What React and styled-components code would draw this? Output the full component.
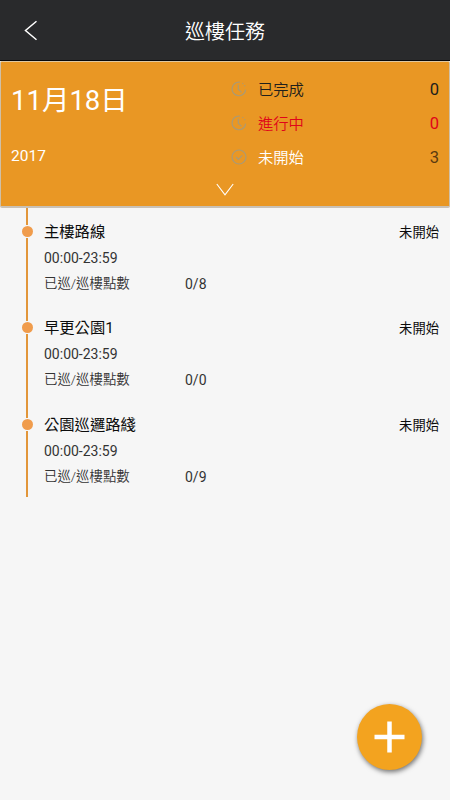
import React, { useState } from "react";
import styled, { createGlobalStyle } from "styled-components";

const summary = [
  { label: "已完成", count: 0, icon: "clock", color: "#20201c" },
  { label: "進行中", count: 0, icon: "clock", color: "#e0041a" },
  {
    label: "未開始",
    count: 3,
    icon: "check",
    color: "#ffffff",
    countColor: "#5a3a10",
  },
];

const tasks = [
  { id: 1, name: "主樓路線", time: "00:00-23:59", points: "0/8" },
  { id: 2, name: "早更公園1", time: "00:00-23:59", points: "0/0" },
  { id: 3, name: "公園巡邏路綫", time: "00:00-23:59", points: "0/9" },
];

const StatusIcon = ({ type }) => (
  <IconSvg viewBox="0 0 16 16">
    {type === "clock" ? (
      <>
        <path d="M8.8 1.2A6.8 6.8 0 1 0 14.6 8.6" />
        <path d="M11.4 2.2l.9.7M13.4 4.2l.6 1.1" />
        <path d="M7.3 3.8v4.4l3.2 3.2" />
      </>
    ) : (
      <>
        <circle cx="8" cy="8" r="7" />
        <path d="M5 8l2.4 2.3 3.9-4" />
      </>
    )}
  </IconSvg>
);

const App = () => {
  const [items] = useState(tasks);

  return (
    <>
      <GlobalStyle />
      <Screen>
        <Header>
          <BackButton aria-label="返回">
            <svg width="14" height="21" viewBox="0 0 14 21">
              <path d="M12.5 1.2L1.5 10.5l11 9.3" />
            </svg>
          </BackButton>
          <Title>巡樓任務</Title>
        </Header>
        <SummaryCard>
          <SummaryBody>
            <DateColumn>
              <DateText>11月18日</DateText>
              <Year>2017</Year>
            </DateColumn>
            <StatusList>
              {summary.map((row) => (
                <StatusRow key={row.label} color={row.color}>
                  <StatusIcon type={row.icon} />
                  <StatusLabel>{row.label}</StatusLabel>
                  <StatusCount $color={row.countColor}>{row.count}</StatusCount>
                </StatusRow>
              ))}
            </StatusList>
          </SummaryBody>
          <ExpandButton aria-label="展開">
            <svg width="18" height="13" viewBox="0 0 18 13">
              <path d="M0.8 1L9 11.8 17.2 1" />
            </svg>
          </ExpandButton>
        </SummaryCard>
        <TaskList>
          {items.map((task) => (
            <TaskItem key={task.id}>
              <Timeline>
                <Line $top />
                <Dot />
                <Line />
              </Timeline>
              <TaskContent>
                <TaskHead>
                  <TaskName>{task.name}</TaskName>
                  <TaskStatus>未開始</TaskStatus>
                </TaskHead>
                <TaskTime>{task.time}</TaskTime>
                <TaskPoints>
                  <PointsLabel>已巡/巡樓點數</PointsLabel>
                  <span>{task.points}</span>
                </TaskPoints>
              </TaskContent>
            </TaskItem>
          ))}
        </TaskList>
        <AddButton aria-label="新增">
          <svg width="31" height="32" viewBox="0 0 31 32">
            <path d="M15.5 0.5v31M0.5 16h30" />
          </svg>
        </AddButton>
      </Screen>
    </>
  );
};

const GlobalStyle = createGlobalStyle`
  * {
    box-sizing: border-box;
  }

  body {
    margin: 0;
    background-color: #f6f6f6;
    font-family: Roboto, "Noto Sans CJK TC", sans-serif;
  }

  button {
    padding: 0;
    border: none;
    background: none;
    cursor: pointer;
  }

  svg {
    display: block;
    fill: none;
  }
`;

const Screen = styled.div`
  height: 800px;
  overflow: hidden;
  background-color: #f6f6f6;
`;

const Header = styled.header`
  display: grid;
  grid-template-columns: 60px 1fr 60px;
  align-items: center;
  height: 61px;
  background-color: #292a2c;
  border-bottom: 1px solid #08080a;
`;

const BackButton = styled.button`
  padding-left: 24px;

  path {
    stroke: #ffffff;
    stroke-width: 1.5;
  }
`;

const Title = styled.h1`
  margin: 3px 0 0;
  color: #ffffff;
  font-size: 20px;
  font-weight: 350;
  line-height: 30px;
  text-align: center;
`;

const SummaryCard = styled.section`
  height: 147px;
  background-color: #e99724;
  border: 1px solid #cfc0a8;
  border-top-color: #e0c8a0;
  border-bottom: 2px solid #c9c1b6;
  border-radius: 2px;
`;

const SummaryBody = styled.div`
  display: flex;
  justify-content: space-between;
  height: 118px;
  padding: 10px 10px 0 10px;
`;

const DateColumn = styled.div`
  color: #ffffff;
`;

const DateText = styled.div`
  margin-top: 9px;
  font-size: 27.5px;
  line-height: 40px;
`;

const Year = styled.div`
  margin-top: 25px;
  font-size: 15.5px;
  line-height: 20px;
`;

const StatusList = styled.div`
  width: 208px;
`;

const StatusRow = styled.div`
  display: flex;
  align-items: center;
  height: 34px;
  color: ${(props) => props.color};
`;

const IconSvg = styled.svg`
  width: 16px;
  height: 16px;
  margin-top: -1px;
  stroke: #ab9a74;
  stroke-width: 1.2;
`;

const StatusLabel = styled.span`
  flex: 1;
  margin: -3px 0 0 11px;
  font-size: 15.3px;
  font-weight: 350;
`;

const StatusCount = styled.span`
  color: ${(props) => props.$color || "inherit"};
  font-size: 16.5px;
`;

const ExpandButton = styled.button`
  display: block;
  margin: 3px auto 0;

  path {
    stroke: #ffffff;
    stroke-width: 1.1;
  }
`;

const TaskList = styled.main`
  display: flex;
  flex-direction: column;
`;

const TaskItem = styled.article`
  display: flex;
  height: 96.3px;
  padding: 0 11px 0 21px;
`;

const Timeline = styled.div`
  display: flex;
  flex-direction: column;
  align-items: center;
  width: 12px;
`;

const Line = styled.div`
  width: 2px;
  background-color: #e2963a;
  ${(props) => (props.$top ? "height: 17px;" : "flex: 1;")}
`;

const Dot = styled.div`
  width: 11px;
  height: 11px;
  margin: 1px 0;
  border-radius: 50%;
  background-color: #f09c4c;
`;

const TaskContent = styled.div`
  flex: 1;
  padding: 8px 0 0 11px;
  color: #333333;
`;

const TaskHead = styled.div`
  display: flex;
  justify-content: space-between;
  align-items: center;
  height: 28px;
  color: #0c0c0c;
`;

const TaskName = styled.span`
  font-size: 15.3px;
`;

const TaskStatus = styled.span`
  margin-top: 3px;
  font-size: 13.3px;
`;

const TaskTime = styled.div`
  margin-top: 1px;
  font-size: 14px;
  line-height: 27px;
`;

const TaskPoints = styled.div`
  display: flex;
  font-size: 14px;
  line-height: 24px;
`;

const PointsLabel = styled.span`
  width: 141px;
  color: #333333;
  font-size: 13.4px;
  font-weight: 350;
`;

const AddButton = styled.button`
  position: absolute;
  top: 704px;
  left: 357px;
  display: flex;
  justify-content: center;
  align-items: center;
  width: 65px;
  height: 66px;
  border-radius: 50%;
  background-color: #f3a31f;
  box-shadow: 1px 2px 5px rgba(0, 0, 0, 0.55);

  path {
    stroke: #ffffff;
    stroke-width: 4.5;
  }
`;

export default App;
